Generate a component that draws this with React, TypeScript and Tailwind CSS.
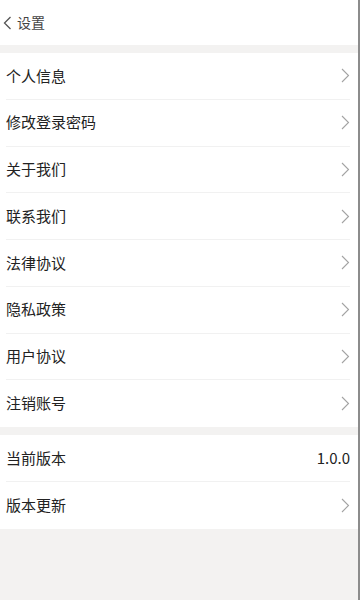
const group1 = [
  "个人信息",
  "修改登录密码",
  "关于我们",
  "联系我们",
  "法律协议",
  "隐私政策",
  "用户协议",
  "注销账号",
];

function Chevron() {
  return (
    <svg width="9" height="15" viewBox="0 0 9 15" fill="none" className="shrink-0">
      <path d="M1 1l6.5 6.5L1 14" stroke="#a3a3a3" strokeWidth="1.1" />
    </svg>
  );
}

function Row({ label, right, last }: { label: string; right?: string; last?: boolean }) {
  return (
    <div className="bg-white pl-[6px] pr-[8px]">
      <div
        className={`flex h-[46.75px] items-center justify-between ${
          last ? "" : "border-b border-[#f1f1f1]"
        }`}
      >
        <span className="text-[15px] text-[#222]">{label}</span>
        {right ? (
          <span className="text-[15px] text-[#222]">{right}</span>
        ) : (
          <Chevron />
        )}
      </div>
    </div>
  );
}

export default function App() {
  return (
    <div
      className="flex h-[600px] w-[360px] bg-white"
      style={{ fontFamily: '"Noto Sans CJK SC", "Noto Sans", sans-serif' }}
    >
      <div className="flex w-[358px] flex-col bg-[#f3f2f1]">
        <div className="flex h-[45px] items-center gap-[5px] bg-white pl-[3px]">
          <svg width="9" height="14" viewBox="0 0 9 14" fill="none">
            <path d="M7.5 1L1.5 7l6 6" stroke="#555" strokeWidth="1.3" />
          </svg>
          <span className="text-[14px] text-[#444]">设置</span>
        </div>
        <div className="h-[8px]" />
        {group1.map((l, i) => (
          <Row key={l} label={l} last={i === group1.length - 1} />
        ))}
        <div className="h-[8px]" />
        <Row label="当前版本" right="1.0.0" />
        <Row label="版本更新" last />
      </div>
      <div className="w-[2px] bg-[#8c8c8c]" />
    </div>
  );
}
